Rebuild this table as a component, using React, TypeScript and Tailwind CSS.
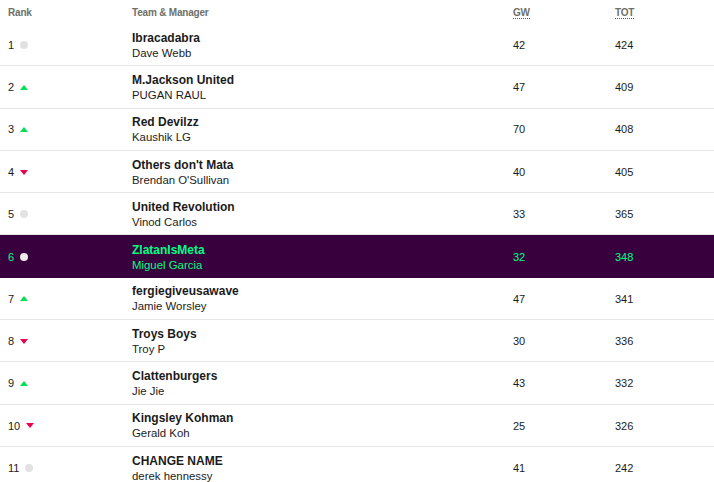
type Move = "same" | "up" | "down";

type Entry = {
  rank: number;
  move: Move;
  team: string;
  manager: string;
  gw: number;
  tot: number;
  mine?: boolean;
};

const entries: Entry[] = [
  { rank: 1, move: "same", team: "Ibracadabra", manager: "Dave Webb", gw: 42, tot: 424 },
  { rank: 2, move: "up", team: "M.Jackson United", manager: "PUGAN RAUL", gw: 47, tot: 409 },
  { rank: 3, move: "up", team: "Red Devilzz", manager: "Kaushik LG", gw: 70, tot: 408 },
  { rank: 4, move: "down", team: "Others don't Mata", manager: "Brendan O'Sullivan", gw: 40, tot: 405 },
  { rank: 5, move: "same", team: "United Revolution", manager: "Vinod Carlos", gw: 33, tot: 365 },
  { rank: 6, move: "same", team: "ZlatanIsMeta", manager: "Miguel Garcia", gw: 32, tot: 348, mine: true },
  { rank: 7, move: "up", team: "fergiegiveusawave", manager: "Jamie Worsley", gw: 47, tot: 341 },
  { rank: 8, move: "down", team: "Troys Boys", manager: "Troy P", gw: 30, tot: 336 },
  { rank: 9, move: "up", team: "Clattenburgers", manager: "Jie Jie", gw: 43, tot: 332 },
  { rank: 10, move: "down", team: "Kingsley Kohman", manager: "Gerald Koh", gw: 25, tot: 326 },
  { rank: 11, move: "same", team: "CHANGE NAME", manager: "derek hennessy", gw: 41, tot: 242 },
];

function MoveIcon({ move, mine }: { move: Move; mine?: boolean }) {
  if (move === "up") {
    return (
      <svg width="8" height="5" viewBox="0 0 8 5" className="ml-[6px]">
        <polygon points="4,0 8,5 0,5" fill="#01e052" />
      </svg>
    );
  }
  if (move === "down") {
    return (
      <svg width="8" height="5" viewBox="0 0 8 5" className="ml-[6px]">
        <polygon points="0,0 8,0 4,5" fill="#e90052" />
      </svg>
    );
  }
  return (
    <span
      className={
        mine
          ? "ml-[6px] inline-block h-2 w-2 rounded-full bg-[#ebebeb]"
          : "ml-[6px] inline-block h-2 w-2 rounded-full bg-[#e2e2e2]"
      }
    />
  );
}

export default function App() {
  return (
    <div className="w-[714px] h-[482px] overflow-hidden bg-white font-['Liberation_Sans',Arial,sans-serif] text-[#1b1b1b]">
      <div className="flex h-[24px] items-center text-[10px] font-bold text-[#6f6f69] tracking-[-0.2px]">
        <div className="w-[132px] pl-[8px]">Rank</div>
        <div className="w-[381px]">Team &amp; Manager</div>
        <div className="w-[102px]">
          <span className="border-b border-dotted border-[#555]">GW</span>
        </div>
        <div>
          <span className="border-b border-dotted border-[#555]">TOT</span>
        </div>
      </div>
      {entries.map((e) => (
        <div
          key={e.rank}
          className={
            e.mine
              ? "flex h-[42.3px] items-center bg-[#38003c] text-[#00ff85]"
              : "flex h-[42.3px] items-center border-b border-[#e6e6e6]"
          }
        >
          <div className="flex w-[132px] items-center pl-[8px] pt-[1px] text-[11px]">
            <span>{e.rank}</span>
            <MoveIcon move={e.move} mine={e.mine} />
          </div>
          <div className="flex w-[381px] flex-col pt-[2px]">
            <span className="text-[12px] font-bold leading-[15px]">{e.team}</span>
            <span className="text-[11.4px] leading-[15px]">{e.manager}</span>
          </div>
          <div className="w-[102px] pt-[1px] text-[11px]">{e.gw}</div>
          <div className="pt-[1px] text-[11px]">{e.tot}</div>
        </div>
      ))}
    </div>
  );
}
